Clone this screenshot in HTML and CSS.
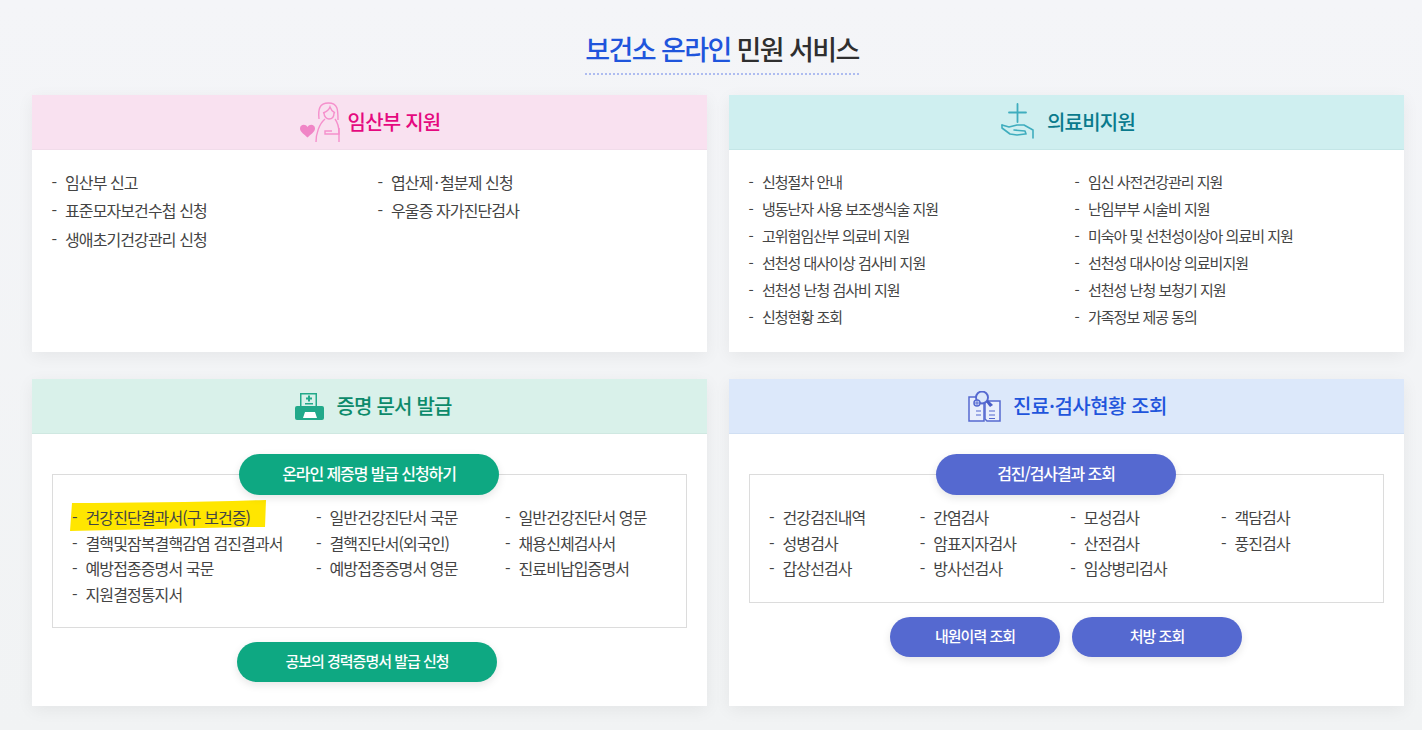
FILE: index.html
```html
<!DOCTYPE html>
<html lang="ko">
<head>
    <meta charset="UTF-8">
    <title>보건소 온라인 민원 서비스</title>
    <link rel="stylesheet" href="styles.css">
</head>
<body>
    <div class="wrap">
        <div class="page-head">
            <h1 class="page-title"><span class="blue">보건소 온라인</span> 민원 서비스</h1>
        </div>

        <div class="cards">
            <section class="card">
                <div class="card-head head-pink">
                    <svg class="icon" width="41" height="41" viewBox="0 0 41 41" fill="none" stroke="#f590cc" stroke-width="1.400">
                        <path d="M1 26.500c0-4 5.500-5 7.500-1.500 2-3.500 7.500-2.500 7.500 1.500 0 3.500-4.500 6-7.500 9-3-3-7.500-5.500-7.500-9z" fill="#f085c6" stroke="none"/>
                        <path d="M20 17C19 8 20 1 29.500 1S39 8 39 18"/>
                        <path d="M24 11c3-1 6-3 7-6 1 3 3 5 5 6"/>
                        <path d="M25 11c0 4 3 6 5 6 3 0 5-2 5-6"/>
                        <path d="M26 17c-6 5-9 15-9 23"/>
                        <path d="M36 17c3 4 4 9 4 14v9"/>
                        <path d="M40 26v6H26v-3h7"/>
                    </svg>
                    <h2 class="card-title pink">임산부 지원</h2>
                </div>
                <ul class="list list-two list-wide">
                    <li>임산부 신고</li>
                    <li>엽산제<span class="dot">·</span>철분제 신청</li>
                    <li>표준모자보건수첩 신청</li>
                    <li>우울증 자가진단검사</li>
                    <li>생애초기건강관리 신청</li>
                </ul>
            </section>

            <section class="card">
                <div class="card-head head-teal">
                    <svg class="icon" width="34" height="39" viewBox="0 0 34 39" fill="none" stroke="#3fadbe" stroke-width="1.600" stroke-linecap="round" stroke-linejoin="round">
                        <path d="M16.500 1v18M8 9.500h17" stroke-width="1.800"/>
                        <path d="M1 22l7 2 8-2h7l9 5v8"/>
                        <path d="M1 22v3l8 6 7 1 8-1"/>
                        <path d="M13 27l11 1 1 3"/>
                    </svg>
                    <h2 class="card-title teal">의료비지원</h2>
                </div>
                <ul class="list list-two list-small">
                    <li>신청절차 안내</li>
                    <li>임신 사전건강관리 지원</li>
                    <li>냉동난자 사용 보조생식술 지원</li>
                    <li>난임부부 시술비 지원</li>
                    <li>고위험임산부 의료비 지원</li>
                    <li>미숙아 및 선천성이상아 의료비 지원</li>
                    <li>선천성 대사이상 검사비 지원</li>
                    <li>선천성 대사이상 의료비지원</li>
                    <li>선천성 난청 검사비 지원</li>
                    <li>선천성 난청 보청기 지원</li>
                    <li>신청현황 조회</li>
                    <li>가족정보 제공 동의</li>
                </ul>
            </section>

            <section class="card">
                <div class="card-head head-green">
                    <svg class="icon" width="29" height="28" viewBox="0 0 29 28">
                        <path d="M5 1h17v14H5z" fill="#22a98a"/>
                        <path d="M6.500 2.500h14V14h-14z" fill="#d9f1ea"/>
                        <path d="M13 3.500h2V5.500h2v2h-2v2h-2v-2h-2v-2h2z" fill="#22a98a"/>
                        <path d="M10 11h8v1.500h-8z" fill="#22a98a"/>
                        <path d="M2 14h25a2 2 0 0 1 2 2v10a2 2 0 0 1-2 2H2a2 2 0 0 1-2-2V16a2 2 0 0 1 2-2z" fill="#22a98a"/>
                        <path d="M10 20h10l2 6H8z" fill="#fff"/>
                    </svg>
                    <h2 class="card-title green">증명 문서 발급</h2>
                </div>
                <div class="card-body">
                    <a class="pill pill-green pill-top">온라인 제증명 발급 신청하기</a>
                    <div class="box">
                        <ul class="list list-cert">
                            <li class="marked">
                                <svg class="marker" width="196" height="31" viewBox="0 0 196 31"><path d="M2 3C60 3 130 2 196 0l-1 27-20 0C120 28 60 30 0 31z" fill="#ffe600"/></svg>
                                <span>건강진단결과서(구 보건증)</span>
                            </li>
                            <li>일반건강진단서 국문</li>
                            <li>일반건강진단서 영문</li>
                            <li>결핵및잠복결핵감염 검진결과서</li>
                            <li>결핵진단서(외국인)</li>
                            <li>채용신체검사서</li>
                            <li>예방접종증명서 국문</li>
                            <li>예방접종증명서 영문</li>
                            <li>진료비납입증명서</li>
                            <li>지원결정통지서</li>
                        </ul>
                    </div>
                    <div class="pill-row pill-row-left">
                        <a class="pill pill-green pill-low">공보의 경력증명서 발급 신청</a>
                    </div>
                </div>
            </section>

            <section class="card">
                <div class="card-head head-blue">
                    <svg class="icon" width="34" height="31" viewBox="0 0 34 31" fill="none" stroke="#5569d0" stroke-width="1.500">
                        <path d="M2 6h8v5l7 1v18H2z" fill="#e9effc"/>
                        <path d="M18 10h15v20H20l-2-2z" fill="#e9effc"/>
                        <circle cx="15" cy="6.500" r="6" fill="#dce8fa" stroke-width="1.900"/>
                        <path d="M19 11l2-2 5 5-3 2z" fill="#4a5ec8" stroke="none"/>
                        <circle cx="10" cy="12" r="3" fill="#e9effc"/>
                        <path d="M8 12h4M10 10v4" stroke-width="1"/>
                        <path d="M9 20h5M9 24h5M22 20h6M22 24h6M22 27.500h6" stroke-width="1.200"/>
                    </svg>
                    <h2 class="card-title blue title-wide">진료·검사현황 조회</h2>
                </div>
                <div class="card-body">
                    <a class="pill pill-purple pill-top">검진/검사결과 조회</a>
                    <div class="box">
                        <ul class="list list-exam">
                            <li>건강검진내역</li>
                            <li>간염검사</li>
                            <li>모성검사</li>
                            <li>객담검사</li>
                            <li>성병검사</li>
                            <li>암표지자검사</li>
                            <li>산전검사</li>
                            <li>풍진검사</li>
                            <li>갑상선검사</li>
                            <li>방사선검사</li>
                            <li>임상병리검사</li>
                        </ul>
                    </div>
                    <div class="pill-row pill-row-left pill-row-two">
                        <a class="pill pill-purple pill-small">내원이력 조회</a>
                        <a class="pill pill-purple pill-small">처방 조회</a>
                    </div>
                </div>
            </section>
        </div>
    </div>
</body>
</html>
```

FILE: styles.css
```css
* {
    box-sizing: border-box;
}
html, body {
    margin: 0;
    padding: 0;
}
body {
    font-family: "Noto Sans CJK KR", "Noto Sans", sans-serif;
    letter-spacing: -0.05em;
    background: linear-gradient(#f4f5f8, #f1f3f4);
    color: #333;
    height: 730px;
    overflow: hidden;
}
.wrap {
    width: 1372px;
    margin-left: 32px;
}
.page-head {
    height: 95px;
    padding-top: 29px;
    padding-left: 8px;
    text-align: center;
}
.page-title {
    display: inline-block;
    margin: 0;
    height: 46px;
    font-size: 27px;
    line-height: 40px;
    font-weight: 500;
    letter-spacing: -1.600px;
    color: #2f2f2f;
    border-bottom: 2px dotted #aebcf0;
}
.blue {
    color: #1f55dc;
}
.cards {
    display: grid;
    grid-template-columns: 675px 675px;
    grid-template-rows: 257px 327px;
    column-gap: 22px;
    row-gap: 27px;
}
.card {
    background: #fff;
    box-shadow: 0 4px 16px rgba(0, 0, 0, 0.06);
}
.card-head {
    display: flex;
    align-items: center;
    justify-content: center;
    gap: 12px;
    height: 55px;
    padding-left: 3px;
    border-bottom: 1px solid #f1dcea;
}
.head-pink {
    background: #f9e1f0;
    gap: 8px;
    padding-left: 0;
}
.head-teal {
    background: #cfeff0;
    border-bottom-color: #c4e6e7;
}
.head-green {
    background: #d9f1ea;
    border-bottom-color: #cfe8e1;
    gap: 12px;
    padding-left: 8px;
}
.head-blue {
    background: #dce8fa;
    border-bottom-color: #d0dff3;
    padding-left: 1px;
}
.card-title {
    margin: 0;
    font-size: 20px;
    line-height: 28px;
    font-weight: 500;
}
.title-wide {
    letter-spacing: -0.500px;
}
.icon {
    flex: none;
}
.pink {
    color: #e5097f;
}
.teal {
    color: #0a7a8c;
}
.green {
    color: #0c8a6b;
}
.card-body {
    padding: 20px 20px 0;
}
.box {
    border: 1px solid #dcdcdc;
    padding: 30px 0 20px 19px;
}
.pill {
    display: flex;
    align-items: center;
    justify-content: center;
    color: #fff;
    font-size: 15px;
    font-weight: 500;
    letter-spacing: -1px;
    border-radius: 22px;
    box-shadow: 0 3px 8px rgba(0, 0, 0, 0.1);
    padding-bottom: 3px;
}
.pill-green {
    background: #0ea882;
}
.pill-purple {
    background: #5569d0;
}
.pill-top {
    position: relative;
    z-index: 1;
    width: 260px;
    height: 41px;
    margin: 0 0 -21px 187px;
    font-size: 16px;
    letter-spacing: -1.100px;
}
.pill-purple.pill-top {
    width: 240px;
}
.pill-low {
    width: 260px;
    height: 40px;
}
.pill-small {
    width: 170px;
    height: 40px;
    padding-bottom: 2px;
}
.pill-row {
    display: flex;
    gap: 12px;
    margin-top: 14px;
}
.pill-row-left {
    padding-left: 185px;
}
.pill-row-two {
    padding-left: 141px;
}
.list {
    list-style: none;
    margin: 0;
    font-size: 16px;
    letter-spacing: -0.900px;
    color: #444;
}
.list li {
    position: relative;
    padding-left: 13.500px;
    white-space: nowrap;
}
.list li::before {
    content: "-";
    position: absolute;
    left: 0;
    top: 0;
}
.dot {
    margin: 0 2px;
}
.list-two {
    display: grid;
    grid-template-columns: 326px 1fr;
    grid-auto-rows: 27px;
    line-height: 27px;
    padding: 18px 0 0 19.500px;
}
.list-small {
    font-size: 15px;
    letter-spacing: -1px;
}
.list-wide {
    grid-auto-rows: 28.500px;
    line-height: 28.500px;
    padding-top: 17.500px;
}
.list-cert {
    display: grid;
    grid-template-columns: 244px 189px 1fr;
    grid-auto-rows: 25.600px;
    line-height: 25.600px;
    padding: 0;
}
.list-exam {
    display: grid;
    grid-template-columns: repeat(4, 150.670px);
    grid-auto-rows: 25.600px;
    line-height: 25.600px;
    padding: 0;
}
.marked span {
    position: relative;
}
.marked::before {
    z-index: 1;
}
.marker {
    position: absolute;
    left: -2px;
    top: -5px;
}
```
